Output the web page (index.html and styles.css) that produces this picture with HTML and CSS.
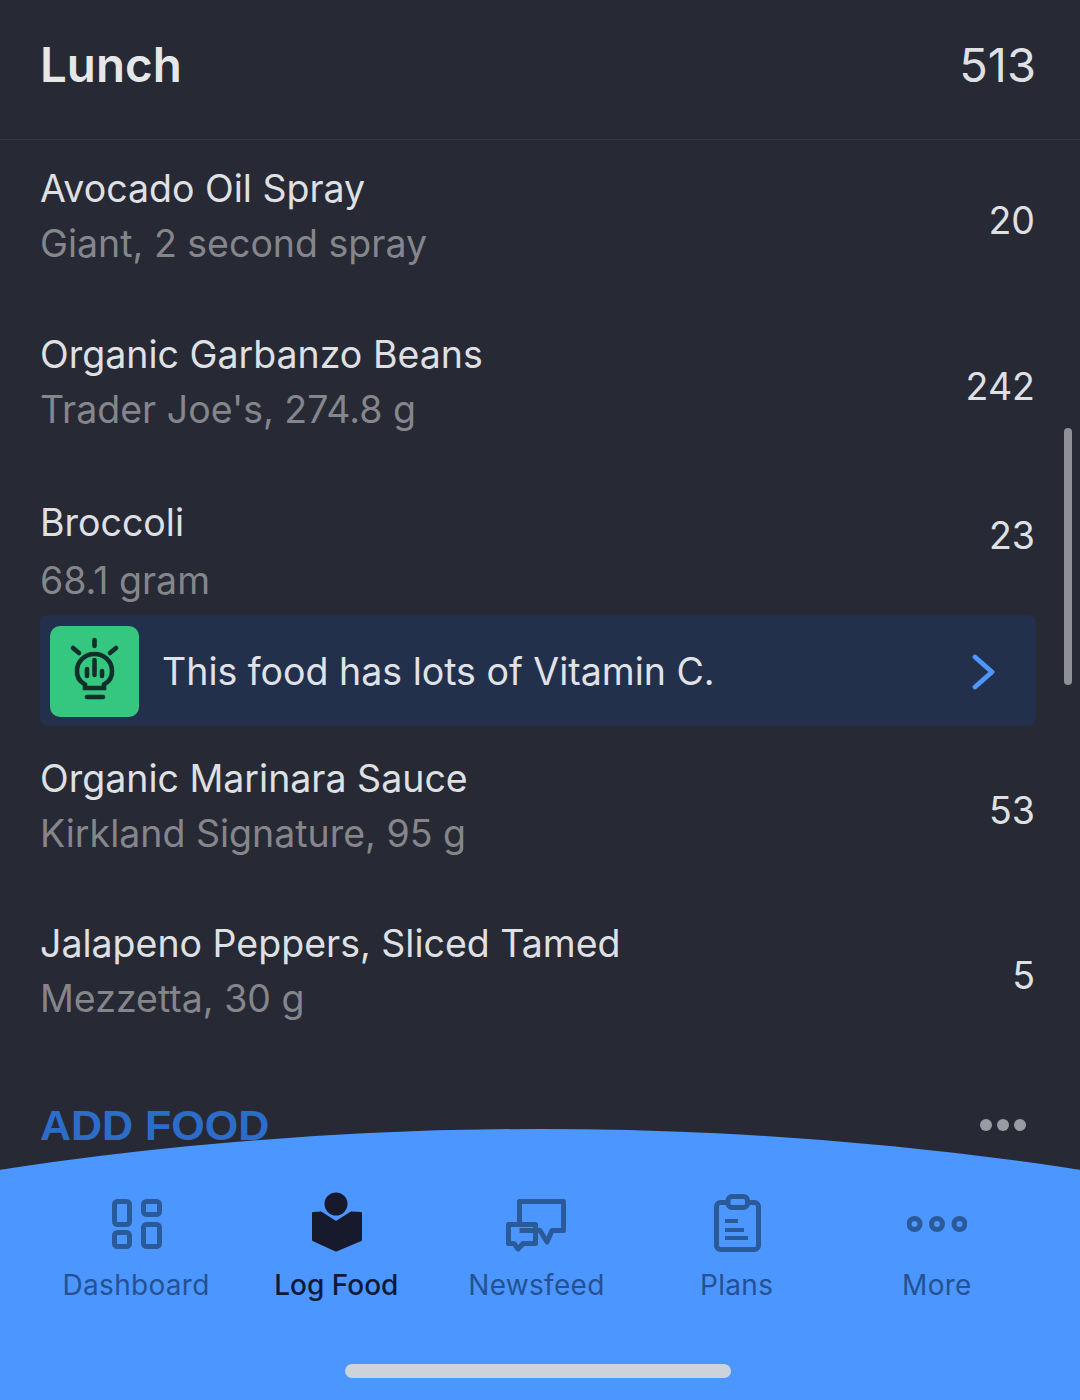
FILE: index.html
```html
<!DOCTYPE html>
<html lang="en">
<head>
<meta charset="utf-8">
<title>Lunch</title>
<link rel="stylesheet" href="styles.css">
</head>
<body>
<div class="screen">
  <header class="meal-head">
    <h1 class="meal-title">Lunch</h1>
    <span class="meal-total">513</span>
  </header>
  <main class="list">
    <div class="row row-first">
      <div class="row-text"><div class="name">Avocado Oil Spray</div><div class="sub">Giant, 2 second spray</div></div>
      <div class="cal">20</div>
    </div>
    <div class="row row-second">
      <div class="row-text"><div class="name">Organic Garbanzo Beans</div><div class="sub">Trader Joe's, 274.8 g</div></div>
      <div class="cal">242</div>
    </div>
    <div class="row row-third">
      <div class="row-text"><div class="name">Broccoli</div><div class="sub sub-low">68.1 gram</div></div>
      <div class="cal">23</div>
    </div>
    <div class="tip">
      <div class="tip-tile">
        <svg class="tip-icon" viewBox="0 0 89 91" fill="none" stroke="#0f2f2b" stroke-width="4.6" stroke-linecap="round">
          <path d="M35 58.5C29.5 55.5 26.5 50 27 44C27.5 35 35 28 44.500 28C54 28 61.500 35 62 44C62.500 50 59.500 55.500 54 58.500V62H35Z"/>
          <path d="M37 71H53"/>
          <path d="M44.500 14V20M23 22L29 27M66 22L60 27"/>
          <path d="M37 43V50M44.500 34V49M52 45V50"/>
        </svg>
      </div>
      <div class="tip-text">This food has lots of Vitamin C.</div>
      <svg class="tip-chevron" viewBox="0 0 24 36" fill="none" stroke="#4f97ff" stroke-width="4.800" stroke-linecap="round" stroke-linejoin="round">
        <path d="M3 3L20 18L3 33"/>
      </svg>
    </div>
    <div class="row row-fourth">
      <div class="row-text"><div class="name">Organic Marinara Sauce</div><div class="sub">Kirkland Signature, 95 g</div></div>
      <div class="cal">53</div>
    </div>
    <div class="row">
      <div class="row-text"><div class="name">Jalapeno Peppers, Sliced Tamed</div><div class="sub">Mezzetta, 30 g</div></div>
      <div class="cal">5</div>
    </div>
    <div class="add-row">
      <span class="add-food">ADD FOOD</span>
      <span class="dots"><i></i><i></i><i></i></span>
    </div>
  </main>
  <div class="scrollbar"></div>
  <nav class="tabbar">
    <div class="tabs">
      <div class="tab">
        <svg class="tab-icon" viewBox="0 0 60 60" fill="none" stroke="#2b5a9b" stroke-width="5">
          <rect x="8.500" y="9.500" width="15" height="23" rx="3"/>
          <rect x="37.500" y="9.500" width="16" height="13" rx="3"/>
          <rect x="8.500" y="40.500" width="15" height="14" rx="3"/>
          <rect x="37.500" y="32.500" width="16" height="22" rx="3"/>
        </svg>
        <span class="tab-label">Dashboard</span>
      </div>
      <div class="tab tab-active">
        <svg class="tab-icon" viewBox="0 0 60 60" fill="#171a2c" stroke="#171a2c" stroke-width="2" stroke-linejoin="round">
          <circle cx="30" cy="12" r="10.500"/>
          <path d="M7 21L15 20.500L30 30L45 20.500L55 21V48L30 58.500L7 48Z"/>
        </svg>
        <span class="tab-label">Log Food</span>
      </div>
      <div class="tab">
        <svg class="tab-icon" viewBox="0 0 60 60" fill="none" stroke="#2b5a9b" stroke-width="5" stroke-linejoin="round">
          <path d="M13.500 32V9.500H57.500V38.500H46L41 50L34 38.500H13.500"/>
          <path d="M2.500 32.500H29.500V51.500H17L12 57L8 51.500H2.500Z"/>
        </svg>
        <span class="tab-label">Newsfeed</span>
      </div>
      <div class="tab">
        <svg class="tab-icon" viewBox="0 0 60 60" fill="none" stroke="#2b5a9b" stroke-width="5" stroke-linejoin="round">
          <rect x="9.500" y="10.500" width="42" height="47" rx="4"/>
          <rect x="21" y="4.500" width="19.500" height="11" rx="4" fill="#4c96ff"/>
          <path d="M18 29H31M18 38H37M18 46H41" stroke-width="4"/>
        </svg>
        <span class="tab-label">Plans</span>
      </div>
      <div class="tab">
        <svg class="tab-icon" viewBox="0 0 60 60" fill="none" stroke="#2b5a9b" stroke-width="5">
          <circle cx="7.500" cy="32" r="5.500"/>
          <circle cx="30" cy="32" r="5.500"/>
          <circle cx="52.500" cy="32" r="5.500"/>
        </svg>
        <span class="tab-label">More</span>
      </div>
    </div>
    <div class="home-bar"></div>
  </nav>
</div>
</body>
</html>
```
FILE: styles.css
```css
* { box-sizing: border-box; }
html, body { margin: 0; padding: 0; }
body { background: #272935; font-family: Inter, "Liberation Sans", sans-serif; }
.screen { position: relative; width: 1080px; height: 1400px; overflow: hidden; background: #272935; color: #dfe0e3; }
.meal-head { display: flex; justify-content: space-between; align-items: center; height: 140px; padding: 0 44px 11px 40px; border-bottom: 1px solid #33353f; }
.meal-title { margin: 0; font-size: 47.5px; font-weight: 600; color: #e6e7e8; }
.meal-total { font-size: 47px; font-weight: 400; }
.list { padding: 21px 45px 0 40px; }
.row { display: flex; justify-content: space-between; align-items: center; margin-bottom: 55px; }
.row-first { margin-bottom: 56px; }
.row-second { margin-bottom: 58px; }
.row-third { margin-bottom: 7px; }
.row-third .cal { padding: 0 0 32px; }
.row-fourth { margin-bottom: 55px; }
.name, .sub { font-size: 37.5px; line-height: 55px; white-space: nowrap; }
.sub { color: #84868b; }
.sub-low { margin-top: 3px; }
.cal { font-size: 37.5px; padding-top: 8px; }
.tip { display: flex; align-items: center; width: 996px; height: 111px; padding: 11px 0 9px 10px; margin-bottom: 25px; background: #22304c; border-radius: 8px; }
.tip-tile { flex: none; width: 89px; height: 91px; background: #35c77f; border-radius: 10px; }
.tip-icon { display: block; width: 89px; height: 91px; }
.tip-text { flex: 1; padding-left: 23px; font-size: 37.5px; color: #e0e2e8; white-space: nowrap; }
.tip-chevron { flex: none; width: 24px; height: 36px; margin-right: 40px; }
.add-row { display: flex; justify-content: space-between; align-items: center; margin-top: 72px; height: 54px; padding-right: 9px; }
.add-food { font-size: 43px; font-weight: 700; color: #2b6dc9; font-family: "Liberation Sans", sans-serif; }
.dots { display: flex; gap: 5px; }
.dots i { width: 12px; height: 12px; border-radius: 50%; background: #9a9ba2; }
.scrollbar { position: absolute; left: 1064px; top: 428px; width: 8px; height: 257px; border-radius: 4px; background: #8f9196; }
.tabbar { position: absolute; left: 0; right: 0; bottom: 0; height: 271px; padding: 63px 43px 0 36px; background: #4c96ff; clip-path: circle(3600px at 50% 3600px); }
.tabs { display: grid; grid-template-columns: repeat(5, 1fr); }
.tab { display: flex; flex-direction: column; align-items: center; }
.tab-icon { display: block; width: 60px; height: 60px; }
.tab-label { margin-top: 15px; font-size: 28px; line-height: 36px; letter-spacing: 0.3px; color: #255192; white-space: nowrap; }
.tab-active .tab-label { color: #10193a; font-weight: 500; letter-spacing: 0; }
.home-bar { position: absolute; left: 345px; top: 235px; width: 386px; height: 14px; border-radius: 7px; background: #cdd3dc; }
```
